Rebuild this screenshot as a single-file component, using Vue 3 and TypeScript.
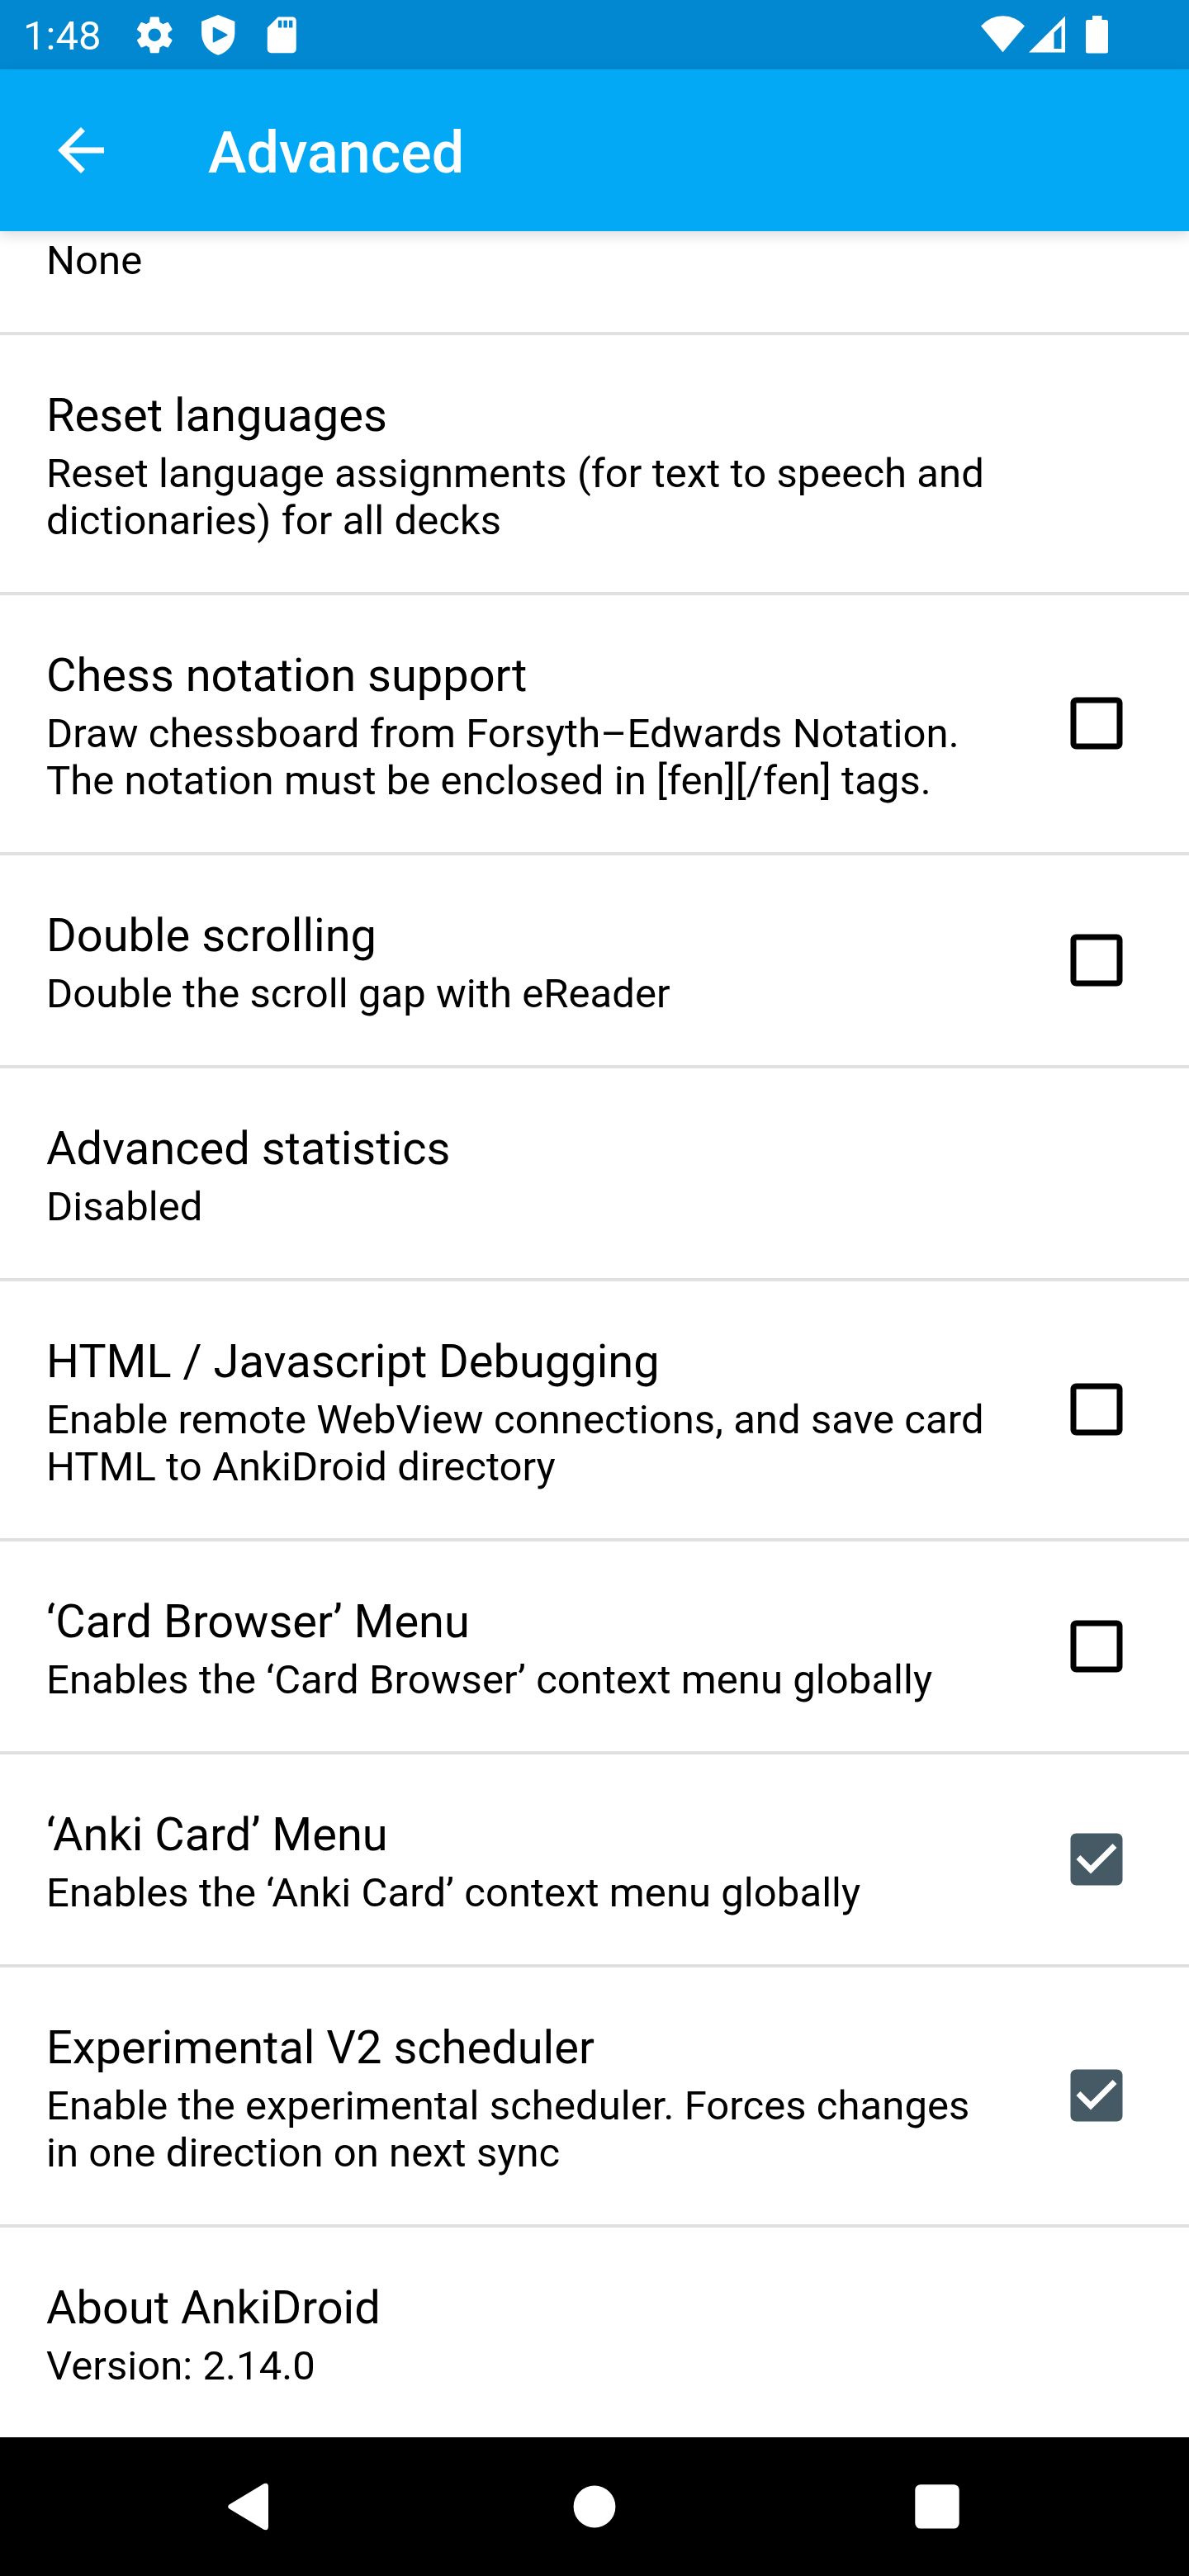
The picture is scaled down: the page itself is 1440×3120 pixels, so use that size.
<script setup lang="ts">
import { ref } from 'vue'

interface Preference {
  title: string
  summary: string
  tall?: boolean
  checked?: boolean | null
}

const preferences = ref<Preference[]>([
  {
    title: 'Reset languages',
    summary: 'Reset language assignments (for text to speech and dictionaries) for all decks',
    tall: true,
    checked: null,
  },
  {
    title: 'Chess notation support',
    summary: 'Draw chessboard from Forsyth–Edwards Notation. The notation must be enclosed in [fen][/fen] tags.',
    tall: true,
    checked: false,
  },
  { title: 'Double scrolling', summary: 'Double the scroll gap with eReader', checked: false },
  { title: 'Advanced statistics', summary: 'Disabled', checked: null },
  {
    title: 'HTML / Javascript Debugging',
    summary: 'Enable remote WebView connections, and save card HTML to AnkiDroid directory',
    tall: true,
    checked: false,
  },
  { title: '‘Card Browser’ Menu', summary: 'Enables the ‘Card Browser’ context menu globally', checked: false },
  { title: '‘Anki Card’ Menu', summary: 'Enables the ‘Anki Card’ context menu globally', checked: true },
  {
    title: 'Experimental V2 scheduler',
    summary: 'Enable the experimental scheduler. Forces changes in one direction on next sync',
    tall: true,
    checked: true,
  },
  { title: 'About AnkiDroid', summary: 'Version: 2.14.0', checked: null },
])

function toggle(item: Preference) {
  if (item.checked !== null) item.checked = !item.checked
}
</script>

<template>
  <div class="screen">
    <header class="status">
      <span class="clock">1:48</span>
      <div class="notifications">
        <svg viewBox="0 0 24 24"><path d="M19.43 12.98c.04-.32.07-.64.07-.98s-.03-.66-.07-.98l2.11-1.65c.19-.15.24-.42.12-.64l-2-3.46c-.12-.22-.39-.3-.61-.22l-2.49 1c-.52-.4-1.08-.73-1.69-.98l-.38-2.65C14.46 2.18 14.25 2 14 2h-4c-.25 0-.46.18-.49.42l-.38 2.65c-.61.25-1.17.59-1.69.98l-2.49-1c-.23-.09-.49 0-.61.22l-2 3.46c-.13.22-.07.49.12.64l2.11 1.65c-.04.32-.07.65-.07.98s.03.66.07.98l-2.11 1.65c-.19.15-.24.42-.12.64l2 3.46c.12.22.39.3.61.22l2.49-1c.52.4 1.08.73 1.69.98l.38 2.65c.03.24.24.42.49.42h4c.25 0 .46-.18.49-.42l.38-2.65c.61-.25 1.17-.59 1.69-.98l2.49 1c.23.09.49 0 .61-.22l2-3.46c.12-.22.07-.49-.12-.64l-2.11-1.65zM12 15.5c-1.93 0-3.5-1.57-3.5-3.5s1.57-3.5 3.5-3.5 3.5 1.57 3.5 3.5-1.57 3.5-3.5 3.5z" /></svg>
        <svg viewBox="0 0 24 24"><path fill-rule="evenodd" d="M12 .9L2.8 4.6V11c0 5.9 3.9 10.7 9.2 12.2 5.3-1.500 9.200-6.300 9.200-12.200V4.600zM9.700 7.800Q9 7.500 9 8.300v7.400q0 .8.700.4l7.200-3.700q.6-.4 0-.8z" /></svg>
        <svg viewBox="0 0 24 24"><path d="M18 2h-8L4.020 8 4 20c0 1.100.9 2 2 2h12c1.100 0 2-.9 2-2V4c0-1.100-.9-2-2-2zm-6 6h-2V4h2v4zm3 0h-2V4h2v4zm3 0h-2V4h2v4z" /></svg>
      </div>
      <div class="system">
        <svg class="wifi" viewBox="0 0 53 45"><path d="M0 12.500A34.700 34.700 0 0 1 53 12.500L26.500 44.300z" /></svg>
        <svg class="signal" viewBox="0 0 44 45"><path fill-rule="evenodd" d="M0 44.500L44 .5v44zM30.500 20.500v19.500h9V12z" /></svg>
        <svg class="battery" viewBox="0 0 27 46"><path d="M8 0h11.500v5H24.500Q27 5 27 7.500v35.500q0 2.500-2.500 2.500h-22Q0 45.500 0 43V7.500Q0 5 2.500 5H8z" /></svg>
      </div>
    </header>

    <div class="toolbar">
      <svg viewBox="0 0 24 24"><path d="M20 11H7.830l5.590-5.590L12 4l-8 8 8 8 1.410-1.410L7.830 13H20z" /></svg>
      <h1>Advanced</h1>
    </div>

    <main class="list">
      <section class="partial"><p class="summary">None</p></section>
      <section
        v-for="item in preferences"
        :key="item.title"
        class="row"
        :class="{ tall: item.tall }"
        @click="toggle(item)"
      >
        <div class="copy">
          <h2>{{ item.title }}</h2>
          <p class="summary">{{ item.summary }}</p>
        </div>
        <svg v-if="item.checked === true" class="box on" viewBox="0 0 24 24"><path d="M19 3H5c-1.110 0-2 .9-2 2v14c0 1.100.89 2 2 2h14c1.110 0 2-.9 2-2V5c0-1.100-.89-2-2-2zm-9 14l-5-5 1.410-1.410L10 14.170l7.590-7.590L19 8l-9 9z" /></svg>
        <svg v-else-if="item.checked === false" class="box" viewBox="0 0 24 24"><path d="M19 5v14H5V5h14m0-2H5c-1.100 0-2 .9-2 2v14c0 1.100.9 2 2 2h14c1.100 0 2-.9 2-2V5c0-1.100-.9-2-2-2z" /></svg>
      </section>
    </main>

    <nav class="navbar">
      <svg viewBox="0 0 84 84"><path d="M15 39.200L56.500 14.200Q62 12.500 62 18V66Q62 71.500 56.500 69.800L15 44.800Q11.200 42 15 39.200z" /></svg>
      <svg viewBox="0 0 84 84"><circle cx="42" cy="42" r="25.400" /></svg>
      <svg viewBox="0 0 84 84"><rect x="15.300" y="15.200" width="53.400" height="53.400" rx="6.500" /></svg>
    </nav>
  </div>
</template>

<style>
body {
  margin: 0;
  background: #fff;
}
</style>

<style scoped>
.screen {
  width: 1440px;
  height: 3120px;
  display: flex;
  flex-direction: column;
  overflow: hidden;
  background: #fff;
  color: #000;
  font-family: Roboto, sans-serif;
}

h1,
h2,
p {
  margin: 0;
  font-weight: 400;
}

svg {
  display: block;
  flex: none;
}

.status {
  flex: none;
  box-sizing: border-box;
  height: 84px;
  display: flex;
  align-items: flex-start;
  padding: 0 98px 0 28px;
  background: #0288d1;
  color: #fff;
  fill: #fff;
}

.clock {
  width: 133px;
  padding-top: 15px;
  font-size: 49px;
  line-height: 58px;
}

.notifications {
  display: flex;
  gap: 24.5px;
  padding-top: 16px;
}

.notifications svg {
  width: 52.5px;
  height: 52.5px;
}

.system {
  margin-left: auto;
  display: flex;
  padding-top: 19px;
}

.wifi {
  width: 53px;
  height: 45px;
}

.signal {
  width: 44px;
  height: 45px;
  margin-left: 5px;
}

.battery {
  width: 27px;
  height: 46px;
  margin-left: 25px;
}

.toolbar {
  flex: none;
  box-sizing: border-box;
  height: 196px;
  display: flex;
  align-items: center;
  gap: 112px;
  padding: 0 56px;
  position: relative;
  z-index: 1;
  background: #03a9f4;
  color: #fff;
  fill: #fff;
  box-shadow: 0 5px 16px rgba(0, 0, 0, 0.14);
}

.toolbar svg {
  width: 84px;
  height: 84px;
}

h1 {
  margin-top: 6px;
  font-size: 70px;
  line-height: 82px;
  font-weight: 500;
}

.list {
  flex: none;
  height: 2672px;
  overflow: hidden;
}

.partial {
  padding: 7px 56px 58px;
  border-bottom: 4px solid #e0e0e0;
}

.row {
  display: flex;
  align-items: center;
  justify-content: space-between;
  padding: 0 70px 0 56px;
  border-bottom: 4px solid #e0e0e0;
}

.row:last-child {
  border-bottom: 0;
}

.copy {
  width: 1150px;
  padding: 64px 0 58px;
}

h2 {
  margin-bottom: 9px;
  font-size: 56px;
  line-height: 66px;
}

.summary {
  font-size: 49px;
  line-height: 57px;
  letter-spacing: 0.06px;
}

.box {
  width: 84px;
  height: 84px;
  fill: #000;
}

.box.on {
  fill: #455a64;
}

.tall .box {
  margin-bottom: 1px;
}

.navbar {
  flex: none;
  height: 168px;
  display: flex;
  align-items: center;
  justify-content: center;
  gap: 331px;
  background: #000;
  fill: #fff;
}

.navbar svg {
  width: 84px;
  height: 84px;
}
</style>
